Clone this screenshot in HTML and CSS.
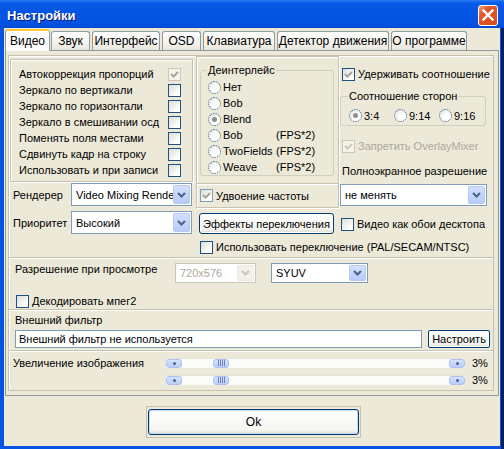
FILE: index.html
```html
<!DOCTYPE html>
<html>
<head>
<meta charset="utf-8">
<link rel="stylesheet" href="styles.css">
</head>
<body>
<div class="window">
  <div class="titlebar">
    <span class="title">Настройки</span>
    <div class="close"><svg width="12" height="12" viewBox="0 0 12 12"><path d="M1.5 1.5 L10.5 10.5 M10.5 1.5 L1.5 10.5" stroke="#fff" stroke-width="2.4" stroke-linecap="square"/></svg></div>
  </div>
  <div class="client">
    <div class="tabs">
      <div class="tab active">Видео</div>
      <div class="tab t-zvuk">Звук</div>
      <div class="tab t-int">Интерфейс</div>
      <div class="tab t-osd">OSD</div>
      <div class="tab t-kl">Клавиатура</div>
      <div class="tab t-det">Детектор движения</div>
      <div class="tab t-op">О программе</div>
    </div>
    <div class="page">
      <div class="sec sec-top">
        <div class="col1">
          <div class="etch opts">
            <div class="orow"><span>Автокоррекция пропорций</span><span class="cb checked disabled"><svg viewBox="0 0 11 11"><path d="M2 5 L4.5 7.5 L9 3" stroke="#a5a59b" stroke-width="2" fill="none"/></svg></span></div>
            <div class="orow"><span>Зеркало по вертикали</span><span class="cb"></span></div>
            <div class="orow"><span>Зеркало по горизонтали</span><span class="cb"></span></div>
            <div class="orow"><span>Зеркало в смешивании осд</span><span class="cb"></span></div>
            <div class="orow"><span>Поменять поля местами</span><span class="cb"></span></div>
            <div class="orow"><span>Сдвинуть кадр на строку</span><span class="cb"></span></div>
            <div class="orow"><span>Использовать и при записи</span><span class="cb"></span></div>
          </div>
          <div class="frow first">
            <span class="flbl">Рендерер</span>
            <div class="select s-rend"><span class="stext">Video Mixing Render</span><span class="sbtn"><svg width="9" height="6" viewBox="0 0 9 6"><path d="M1 1 L4.5 4.5 L8 1" stroke="#4d6185" stroke-width="2" fill="none"/></svg></span></div>
          </div>
          <div class="frow">
            <span class="flbl">Приоритет</span>
            <div class="select s-rend"><span class="stext">Высокий</span><span class="sbtn"><svg width="9" height="6" viewBox="0 0 9 6"><path d="M1 1 L4.5 4.5 L8 1" stroke="#4d6185" stroke-width="2" fill="none"/></svg></span></div>
          </div>
        </div>
        <div class="col2">
          <div class="etch dbox">
            <fieldset class="group deint">
              <legend>Деинтерлейс</legend>
              <div class="rrow"><span class="rb"></span><span class="rl">Нет</span></div>
              <div class="rrow"><span class="rb"></span><span class="rl">Bob</span></div>
              <div class="rrow"><span class="rb on"></span><span class="rl">Blend</span></div>
              <div class="rrow"><span class="rb"></span><span class="rl">Bob</span><span class="fps">(FPS*2)</span></div>
              <div class="rrow"><span class="rb"></span><span class="rl">TwoFields</span><span class="fps">(FPS*2)</span></div>
              <div class="rrow"><span class="rb"></span><span class="rl">Weave</span><span class="fps">(FPS*2)</span></div>
            </fieldset>
          </div>
          <div class="etch dbl">
            <div class="crow"><span class="cb checked dis-border"><svg viewBox="0 0 11 11"><path d="M2 5 L4.5 7.5 L9 3" stroke="#a5a59b" stroke-width="2" fill="none"/></svg></span><span>Удвоение частоты</span></div>
          </div>
          <div class="btn fx">Эффекты переключения</div>
          <div class="crow nowrap sw"><span class="cb"></span><span>Использовать переключение (PAL/SECAM/NTSC)</span></div>
        </div>
        <div class="col3">
          <div class="crow keep"><span class="cb checked"><svg viewBox="0 0 11 11"><path d="M2 5 L4.5 7.5 L9 3" stroke="#a5a59b" stroke-width="2" fill="none"/></svg></span><span>Удерживать соотношение</span></div>
          <fieldset class="group aspect">
            <legend>Соотношение сторон</legend>
            <div class="arow">
              <div class="ritem"><span class="rb on"></span><span class="rl">3:4</span></div>
              <div class="ritem"><span class="rb"></span><span class="rl">9:14</span></div>
              <div class="ritem"><span class="rb"></span><span class="rl">9:16</span></div>
            </div>
          </fieldset>
          <div class="crow dis ovl"><span class="cb checked disabled"><svg viewBox="0 0 11 11"><path d="M2 5 L4.5 7.5 L9 3" stroke="#c8c8be" stroke-width="2" fill="none"/></svg></span><span>Запретить OverlayMixer</span></div>
          <div class="flabel">Полноэкранное разрешение</div>
          <div class="select s-full"><span class="stext">не менять</span><span class="sbtn"><svg width="9" height="6" viewBox="0 0 9 6"><path d="M1 1 L4.5 4.5 L8 1" stroke="#4d6185" stroke-width="2" fill="none"/></svg></span></div>
          <div class="crow wall"><span class="cb"></span><span>Видео как обои десктопа</span></div>
        </div>
      </div>
      <div class="sec sec-res">
        <div class="resrow">
          <span class="rlbl">Разрешение при просмотре</span>
          <div class="select s-dis disabled"><span class="stext">720x576</span><span class="sbtn"><svg width="9" height="6" viewBox="0 0 9 6"><path d="M1 1 L4.5 4.5 L8 1" stroke="#c9c7ba" stroke-width="2" fill="none"/></svg></span></div>
          <div class="select s-yuv"><span class="stext">SYUV</span><span class="sbtn"><svg width="9" height="6" viewBox="0 0 9 6"><path d="M1 1 L4.5 4.5 L8 1" stroke="#4d6185" stroke-width="2" fill="none"/></svg></span></div>
        </div>
        <div class="crow mpeg"><span class="cb"></span><span>Декодировать мпег2</span></div>
      </div>
      <div class="sec sec-filter">
        <div class="flabel">Внешний фильтр</div>
        <div class="filterrow">
          <div class="input">Внешний фильтр не используется</div>
          <div class="btn cfg">Настроить</div>
        </div>
      </div>
      <div class="sec sec-zoom">
        <div class="zrow">
          <span class="zlbl">Увеличение изображения</span>
          <div class="slider"><span class="arr"><i class="dot"></i></span><span class="thumb"><i></i><i></i><i></i><i></i></span><span class="arr right"><i class="dot"></i></span></div>
          <span class="pct">3%</span>
        </div>
        <div class="zrow second">
          <span class="zlbl"></span>
          <div class="slider"><span class="arr"><i class="dot"></i></span><span class="thumb"><i></i><i></i><i></i><i></i></span><span class="arr right"><i class="dot"></i></span></div>
          <span class="pct">3%</span>
        </div>
      </div>
    </div>
    <div class="okrow">
      <div class="okouter"><div class="okbtn">Ok</div></div>
    </div>
  </div>
</div>
</body>
</html>
```
FILE: styles.css
```css
* { box-sizing: border-box; }
html, body { margin: 0; padding: 0; }
body {
  width: 504px; height: 449px; overflow: hidden;
  font-family: "Liberation Sans", Arial, sans-serif;
  font-size: 11px; color: #000;
}
.window {
  width: 504px; height: 449px;
  background: #0554e3;
  display: flex; flex-direction: column;
  padding: 0 1px 3px 4px;
  box-shadow: inset -3px 0 #0b1d5a;
}
.titlebar {
  height: 28px; flex: none;
  display: flex; align-items: center; justify-content: space-between;
  background: linear-gradient(#2a7cf2 0, #0a5ae8 3px, #0556e5 10px, #0452e0 24px, #0348d6 28px);
  margin: 0 -1px 0 -4px;
  padding-left: 7px; padding-right: 6px;
}
.title {
  color: #fff; font-weight: bold; font-size: 13px;
  text-shadow: 1px 1px #0a1a72;
  margin-top: 2px;
}
.close {
  width: 20px; height: 21px; margin-top: 2px;
  border: 1px solid #fff; border-radius: 3px;
  background: linear-gradient(135deg, #f0a080 0, #e2582c 30%, #d8491c 100%);
  display: flex; align-items: center; justify-content: center;
}
.client {
  flex: 1; background: #ece9d8;
  display: flex; flex-direction: column;
  margin-right: 3px;
  padding: 1px 0 0 1px;
}
.tabs {
  display: flex; align-items: flex-end; height: 21px;
  gap: 2px; position: relative; z-index: 1;
}
.tab {
  height: 19px; padding: 0 3px;
  border: 1px solid #919b9c; border-bottom: none;
  border-radius: 3px 3px 0 0;
  background: linear-gradient(#fefefe, #f3f2ec 60%, #e8e6dc);
  display: flex; align-items: center; justify-content: center;
  white-space: nowrap; font-size: 12px;
}
.tab.active {
  width: 45px; margin-right: -1px;
  border-top: 2px solid #ffc83c;
  background: #fcfcfe;
  margin-bottom: -1px; height: 22px;
  padding-bottom: 1px;
}
.t-zvuk { width: 39px; }
.t-int { width: 68px; }
.t-osd { width: 39px; }
.t-kl { width: 72px; }
.t-det { width: 112px; }
.t-op { width: 76px; }
.page {
  width: 494px; height: 346px;
  border: 1px solid #919b9c;
  background: #ece9d8;
  padding: 4px 2px 0 2px;
  display: flex; flex-direction: column;
}
.sec {
  border: 1px solid #c6c3b3;
  box-shadow: inset 1px 1px #fff;
  width: 486px;
  margin-top: -1px;
}
.sec:first-child { margin-top: 0; }
.sec-top {
  height: 203px;
  display: flex; padding: 3px 0 0 1px;
}
.etch {
  border: 1px solid #c6c3b3;
  box-shadow: inset 1px 1px #fff, 1px 1px #fff;
}
.col1 { width: 183px; flex: none; }
.opts { height: 123px; padding: 6px 11px 0 8px; }
.orow { height: 16px; display: flex; align-items: center; justify-content: space-between; white-space: nowrap; }
.cb {
  width: 13px; height: 13px; flex: none;
  border: 1px solid #1c5180;
  background: linear-gradient(135deg, #dcdcd7, #fff 80%);
  display: inline-flex; align-items: center; justify-content: center;
}
.cb svg { width: 11px; height: 11px; }
.cb.disabled { border-color: #cac8bb; background: #f5f4ea; }
.frow { display: flex; align-items: center; height: 23px; margin-top: 5px; }
.frow.first { margin-top: 1px; }
.flbl { width: 61px; padding-left: 3px; flex: none; }
.select {
  height: 23px; border: 1px solid #7f9db9; background: #fff;
  display: flex; align-items: stretch; padding: 1px;
}
.stext { flex: 1; padding-left: 3px; display: flex; align-items: center; overflow: hidden; white-space: nowrap; }
.sbtn {
  width: 17px; flex: none; border-radius: 2px;
  background: linear-gradient(#d3e0fd, #b7cbf8);
  border: 1px solid #b5c8f6;
  display: flex; align-items: center; justify-content: center;
}
.s-rend { width: 121px; }
.col2 { width: 143px; flex: none; margin-left: 3px; margin-top: -3px; }
.dbox { height: 128px; padding: 7px 4px 0 3px; }
.group {
  margin: 0; border: 1px solid #d0d0bf; border-radius: 3px;
  padding: 0 0 0 7px;
}
.group legend { padding: 0 1px; margin-left: -1px; line-height: 12px; }
.deint { height: 112px; padding-top: 3px; }
.rrow { height: 16px; display: flex; align-items: center; white-space: nowrap; }
.rb {
  width: 13px; height: 13px; border-radius: 50%; flex: none;
  border: 1px dotted #1c5180;
  background: radial-gradient(circle at 65% 65%, #fff 30%, #dcdcd7 100%);
  display: inline-flex; align-items: center; justify-content: center;
  margin-right: 2px;
}
.rb.on::after { content: ""; width: 5px; height: 5px; border-radius: 50%; background: #8f8f8a; }
.rl { width: 52px; }
.fps { margin-left: 1px; }
.dbl { height: 25px; margin-top: -1px; padding: 0 0 0 3px; display: flex; align-items: center; }
.crow { display: flex; align-items: center; gap: 3px; white-space: nowrap; height: 16px; }
.cb.dis-border { border-color: #7f9db9; }
.btn {
  border: 1px solid #003c74; border-radius: 3px;
  background: linear-gradient(#fff, #f3f3ef 80%, #dcdad0);
  display: flex; align-items: center; justify-content: center; white-space: nowrap;
}
.fx { width: 135px; height: 21px; margin: 5px 0 0 3px; box-shadow: inset 0 0 0 1px #fff; }
.sw { margin: 5px 0 0 4px; }
.col3 { flex: 1; padding-left: 3px; }
.keep { margin-top: 7px; }
.aspect { width: 146px; height: 36px; margin: 8px 0 0 -2px; padding: 0 0 0 8px; }
.arow { display: flex; height: 17px; align-items: center; margin-top: 5px; }
.ritem { display: flex; align-items: center; width: 45px; }
.ritem .rl { width: auto; }
.dis { color: #aca899; }
.ovl { margin-top: 12px; }
.flabel { white-space: nowrap; }
.col3 .flabel { margin-top: 9px; height: 16px; line-height: 16px; }
.s-full { width: 147px; height: 22px; margin: 5px 0 0 -2px; }
.wall { margin-top: 10px; margin-left: -1px; }
.sec-res { height: 53px; padding: 5px 0 0 6px; }
.resrow { display: flex; align-items: flex-start; height: 20px; }
.rlbl { width: 160px; line-height: 12px; }
.select.disabled { border-color: #c9c7ba; color: #aca899; background: #fff; }
.select.disabled .sbtn { background: #f3f2ea; border-color: #eceadf; }
.s-dis { width: 81px; height: 20px; }
.s-yuv { width: 97px; height: 20px; margin-left: 15px; }
.mpeg { margin: 10px 0 0 1px; }
.sec-filter { height: 42px; padding: 3px 0 0 6px; }
.sec-filter .flabel { height: 15px; line-height: 15px; }
.filterrow { display: flex; gap: 6px; margin-top: 2px; }
.input { width: 407px; height: 18px; border: 1px solid #7f9db9; background: #fff; padding-left: 3px; display: flex; align-items: center; }
.cfg { width: 62px; height: 18px; border-radius: 2px; box-shadow: 0 0 0 1px #fff inset; }
.sec-zoom { height: 41px; padding: 6px 0 0 4px; }
.zrow { display: flex; align-items: center; height: 11px; }
.zrow.second { margin-top: 6px; }
.zlbl { width: 153px; white-space: nowrap; }
.slider {
  width: 299px; height: 10px; display: flex; align-items: stretch;
  background: #fbfbf8; border-top: 1px solid #e6e4da;
}
.arr {
  width: 16px; border-radius: 3px;
  background: linear-gradient(#d6e2fd, #b9cdf9);
  border: 1px solid #aebff0;
  display: flex; align-items: center; justify-content: center;
}
.arr .dot { width: 3px; height: 3px; background: #4d6185; border-radius: 50%; }
.arr.right { margin-left: auto; }
.thumb {
  width: 16px; margin-left: 31px; border-radius: 3px;
  background: linear-gradient(#d6e2fd, #b9cdf9);
  border: 1px solid #aebff0;
  display: flex; align-items: center; justify-content: center; gap: 1px;
}
.thumb i { width: 1px; height: 6px; background: #6f85c0; }
.pct { margin-left: 7px; }
.okrow { flex: 1; display: flex; justify-content: flex-start; padding: 10px 0 0 141px; }
.okouter { width: 215px; height: 32px; border: 1px solid #c6c3b3; padding: 2px 1px; }
.okbtn {
  width: 211px; height: 26px;
  border: 1px solid #003c74; border-radius: 3px;
  background: linear-gradient(#fff, #f4f4f0 85%, #dcd9cd);
  box-shadow: inset 0 0 0 1px #c8d8f5;
  display: flex; align-items: center; justify-content: center;
  font-size: 12px;
}
```
